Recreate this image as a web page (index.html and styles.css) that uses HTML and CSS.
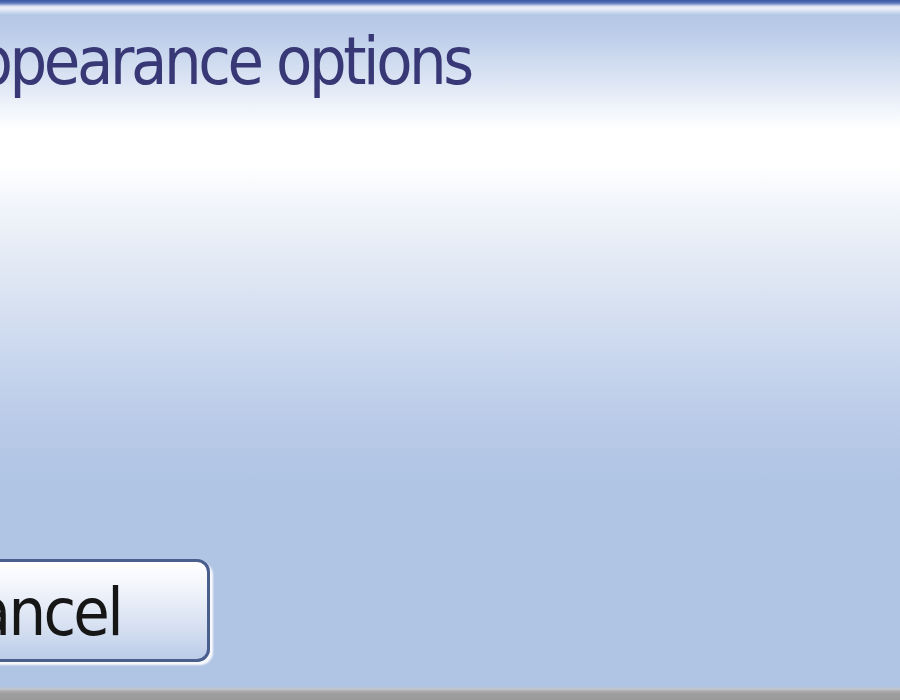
FILE: index.html
```html
<!DOCTYPE html>
<html lang="en">
<head>
<meta charset="utf-8">
<title>Appearance options</title>
<link rel="stylesheet" href="styles.css">
</head>
<body>
<div class="window">
  <div class="titlebar"></div>
  <div class="header">
    <h1 class="title">Appearance options</h1>
  </div>
  <div class="content"></div>
  <div class="footer">
    <button class="btn" type="button"><span class="btn-label">Cancel</span></button>
  </div>
  <div class="statusbar"></div>
</div>
</body>
</html>
```

FILE: styles.css
```css
html, body {
  margin: 0;
  padding: 0;
  width: 900px;
  height: 700px;
  overflow: hidden;
}

.window {
  width: 900px;
  height: 700px;
  display: flex;
  flex-direction: column;
  overflow: hidden;
  font-family: "DejaVu Sans Condensed", "DejaVu Sans", sans-serif;
  font-stretch: condensed;
  background: linear-gradient(to bottom,
    #b0c4e4 0px,
    #bacbe9 30px,
    #d4dff1 70px,
    #f2f5fb 110px,
    #ffffff 130px,
    #ffffff 165px,
    #f0f4fa 210px,
    #dee6f3 280px,
    #cbd8ee 350px,
    #bacbe8 420px,
    #b0c4e4 480px,
    #b0c4e4 100%);
}

.titlebar {
  height: 16px;
  flex: none;
  background: linear-gradient(to bottom,
    #3a58a2 0px,
    #4a68b0 2px,
    #7d94c8 4px,
    #d6dfef 6px,
    #eef2f9 8px,
    #e2e9f5 10px,
    #c4d3ec 13px,
    #b0c4e4 16px);
}

.header {
  flex: none;
  padding-top: 13px;
}

.title {
  margin: 0 0 0 -62px;
  font-size: 66px;
  line-height: 66px;
  font-weight: normal;
  color: #383876;
  white-space: nowrap;
  letter-spacing: -3.4px;
}

.content {
  flex: 1;
}

.footer {
  flex: none;
  padding-bottom: 25px;
  display: flex;
}

.btn {
  margin-left: -80px;
  width: 290px;
  height: 103px;
  box-sizing: border-box;
  border: 3px solid #4b5f8e;
  border-radius: 13px;
  padding: 18px 0 0 13px;
  display: flex;
  align-items: flex-start;
  font-family: inherit;
  font-stretch: condensed;
  font-size: 66px;
  line-height: 66px;
  color: #161616;
  letter-spacing: -2.7px;
  background: linear-gradient(to bottom,
    #ffffff 0%,
    #f2f5fb 25%,
    #dbe4f3 60%,
    #bccce8 100%);
  box-shadow: 3px 3px 2px rgba(255, 255, 255, 0.9);
}

.btn-label {
  white-space: nowrap;
}

.statusbar {
  height: 13px;
  flex: none;
  background: linear-gradient(to bottom,
    #b6c4da 0px,
    #c4c8cf 2px,
    #acacac 4px,
    #9e9e9e 7px,
    #9a9a9a 13px);
}
```
